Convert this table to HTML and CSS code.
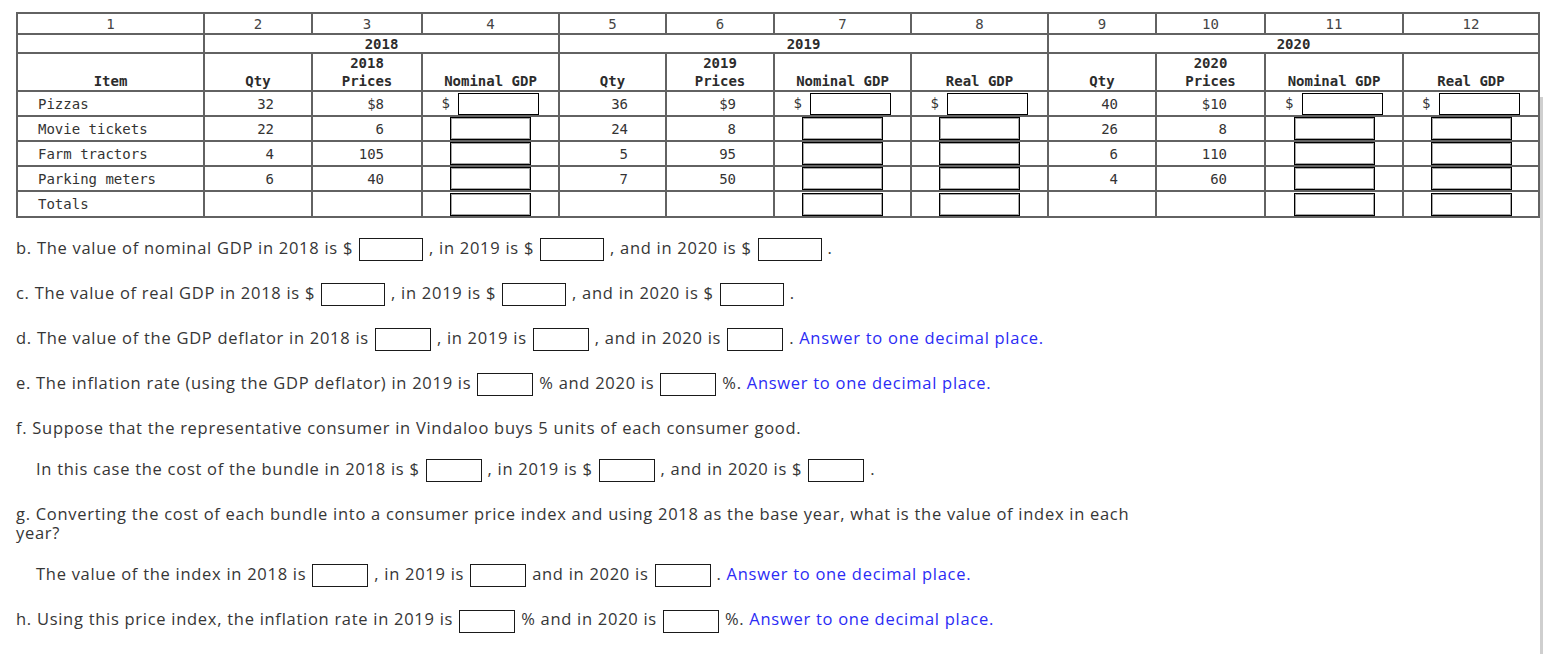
FILE: index.html
```html
<!DOCTYPE html>
<html lang="en">
<head>
<meta charset="utf-8">
<title>GDP worksheet</title>
<link rel="stylesheet" href="styles.css">
</head>
<body>
<div class="page">
  <table class="gdp">
    <colgroup>
      <col class="c-item"><col class="c-qty"><col class="c-price"><col class="c-gdp">
      <col class="c-qty2"><col class="c-qty"><col class="c-gdp"><col class="c-gdp">
      <col class="c-qty"><col class="c-price2"><col class="c-gdp3"><col class="c-gdp4">
    </colgroup>
    <tr class="r-num">
      <td>1</td><td>2</td><td>3</td><td>4</td><td>5</td><td>6</td><td>7</td><td>8</td><td>9</td><td>10</td><td>11</td><td>12</td>
    </tr>
    <tr class="r-year">
      <th></th><th colspan="3">2018</th><th colspan="4">2019</th><th colspan="4">2020</th>
    </tr>
    <tr class="r-head">
      <th>Item</th><th>Qty</th><th>2018<br>Prices</th><th>Nominal GDP</th>
      <th>Qty</th><th>2019<br>Prices</th><th>Nominal GDP</th><th>Real GDP</th>
      <th>Qty</th><th>2020<br>Prices</th><th>Nominal GDP</th><th>Real GDP</th>
    </tr>
    <tr class="r-data">
      <td class="item">Pizzas</td><td class="num">32</td><td class="num">$8</td><td class="box">$ <span class="tin first"></span></td>
      <td class="num">36</td><td class="num">$9</td><td class="box">$ <span class="tin first"></span></td><td class="box">$ <span class="tin first"></span></td>
      <td class="num">40</td><td class="num">$10</td><td class="box">$ <span class="tin first"></span></td><td class="box">$ <span class="tin first"></span></td>
    </tr>
    <tr class="r-data">
      <td class="item">Movie tickets</td><td class="num">22</td><td class="num">6</td><td class="box"><span class="tin"></span></td>
      <td class="num">24</td><td class="num">8</td><td class="box"><span class="tin"></span></td><td class="box"><span class="tin"></span></td>
      <td class="num">26</td><td class="num">8</td><td class="box"><span class="tin"></span></td><td class="box"><span class="tin"></span></td>
    </tr>
    <tr class="r-data">
      <td class="item">Farm tractors</td><td class="num">4</td><td class="num">105</td><td class="box"><span class="tin"></span></td>
      <td class="num">5</td><td class="num">95</td><td class="box"><span class="tin"></span></td><td class="box"><span class="tin"></span></td>
      <td class="num">6</td><td class="num">110</td><td class="box"><span class="tin"></span></td><td class="box"><span class="tin"></span></td>
    </tr>
    <tr class="r-data">
      <td class="item">Parking meters</td><td class="num">6</td><td class="num">40</td><td class="box"><span class="tin"></span></td>
      <td class="num">7</td><td class="num">50</td><td class="box"><span class="tin"></span></td><td class="box"><span class="tin"></span></td>
      <td class="num">4</td><td class="num">60</td><td class="box"><span class="tin"></span></td><td class="box"><span class="tin"></span></td>
    </tr>
    <tr class="r-data r-last">
      <td class="item">Totals</td><td></td><td></td><td class="box"><span class="tin"></span></td>
      <td></td><td></td><td class="box"><span class="tin"></span></td><td class="box"><span class="tin"></span></td>
      <td></td><td></td><td class="box"><span class="tin"></span></td><td class="box"><span class="tin"></span></td>
    </tr>
  </table>

  <div class="questions">
    <p class="q">b. The value of nominal GDP in 2018 is $ <span class="in wide"></span> , in 2019 is $ <span class="in wide"></span> , and in 2020 is $ <span class="in wide"></span> .</p>
    <p class="q">c. The value of real GDP in 2018 is $ <span class="in wide"></span> , in 2019 is $ <span class="in wide"></span> , and in 2020 is $ <span class="in wide"></span> .</p>
    <p class="q">d. The value of the GDP deflator in 2018 is <span class="in"></span> , in 2019 is <span class="in"></span> , and in 2020 is <span class="in"></span> . <span class="hint">Answer to one decimal place.</span></p>
    <p class="q">e. The inflation rate (using the GDP deflator) in 2019 is <span class="in"></span> % and 2020 is <span class="in"></span> %. <span class="hint">Answer to one decimal place.</span></p>
    <p class="q">f. Suppose that the representative consumer in Vindaloo buys 5 units of each consumer good.</p>
    <p class="q sub">In this case the cost of the bundle in 2018 is $ <span class="in"></span> , in 2019 is $ <span class="in"></span> , and in 2020 is $ <span class="in"></span> .</p>
    <p class="q">g. Converting the cost of each bundle into a consumer price index and using 2018 as the base year, what is the value of index in each year?</p>
    <p class="q sub">The value of the index in 2018 is <span class="in"></span> , in 2019 is <span class="in"></span> and in 2020 is <span class="in"></span> . <span class="hint">Answer to one decimal place.</span></p>
    <p class="q">h. Using this price index, the inflation rate in 2019 is <span class="in"></span> % and in 2020 is <span class="in"></span> %. <span class="hint">Answer to one decimal place.</span></p>
  </div>
  <div class="scroll-thumb"></div>
</div>
</body>
</html>
```
FILE: styles.css
```css
html, body {
  margin: 0;
  padding: 0;
  background: #fff;
}

.page {
  position: relative;
  width: 1543px;
  height: 654px;
  padding: 12px 0 0 16px;
  box-sizing: border-box;
  overflow: hidden;
}

.gdp {
  border-collapse: collapse;
  table-layout: fixed;
  width: 1522px;
  font-family: "DejaVu Sans Mono", "Liberation Mono", monospace;
  font-size: 14px;
  color: #333;
}

.c-item { width: 187px; }
.c-qty { width: 108px; }
.c-price { width: 110px; }
.c-gdp { width: 137px; }
.c-qty2 { width: 107px; }
.c-price2 { width: 109px; }
.c-gdp3 { width: 138px; }
.c-gdp4 { width: 136px; }

.gdp td, .gdp th {
  border: 2px solid #626262;
  padding: 0;
  text-align: center;
  vertical-align: middle;
  white-space: nowrap;
}

.gdp th {
  font-weight: bold;
  color: #2c2c2c;
}

.r-num { height: 21px; }
.r-num td { color: #444; line-height: 16px; }
.r-year { height: 19px; }
.r-year th { line-height: 16px; }
.r-head { height: 38px; }
.r-head th {
  vertical-align: bottom;
  line-height: 18px;
  padding-bottom: 0;
}
.r-data { height: 25px; }
.r-data td { line-height: 18px; }
.r-last { height: 26px; }

.gdp td.item {
  text-align: left;
  padding-left: 20px;
}

.gdp td.num {
  text-align: right;
  padding-right: 37px;
}

.tin {
  display: inline-block;
  vertical-align: middle;
  width: 81px;
  height: 23px;
  box-sizing: border-box;
  border: 1px solid #000;
  box-shadow: inset 0 0 0 1px rgba(0, 0, 0, 0.35);
  background: #fff;
}
.tin.first {
  height: 22px;
  box-shadow: none;
}

.questions {
  display: flex;
  flex-direction: column;
  gap: 22px;
  margin-top: 20px;
  width: 1130px;
  font-family: "Open Sans", Lato, sans-serif;
  font-size: 16.5px;
  letter-spacing: 0.72px;
  line-height: 19px;
  color: #363636;
}

.q {
  margin: 0;
}
.q.sub {
  padding-left: 20px;
}

.in {
  display: inline-block;
  vertical-align: middle;
  width: 56px;
  height: 23px;
  box-sizing: border-box;
  border: 1px solid #1a1a1a;
  background: #fff;
  margin: 0 1px;
}
.in.wide {
  width: 64px;
}

.hint {
  color: #2b2bf5;
}

.scroll-thumb {
  position: absolute;
  right: 0;
  top: 97px;
  width: 3px;
  bottom: 0;
  background: #cfcfcf;
}
```
